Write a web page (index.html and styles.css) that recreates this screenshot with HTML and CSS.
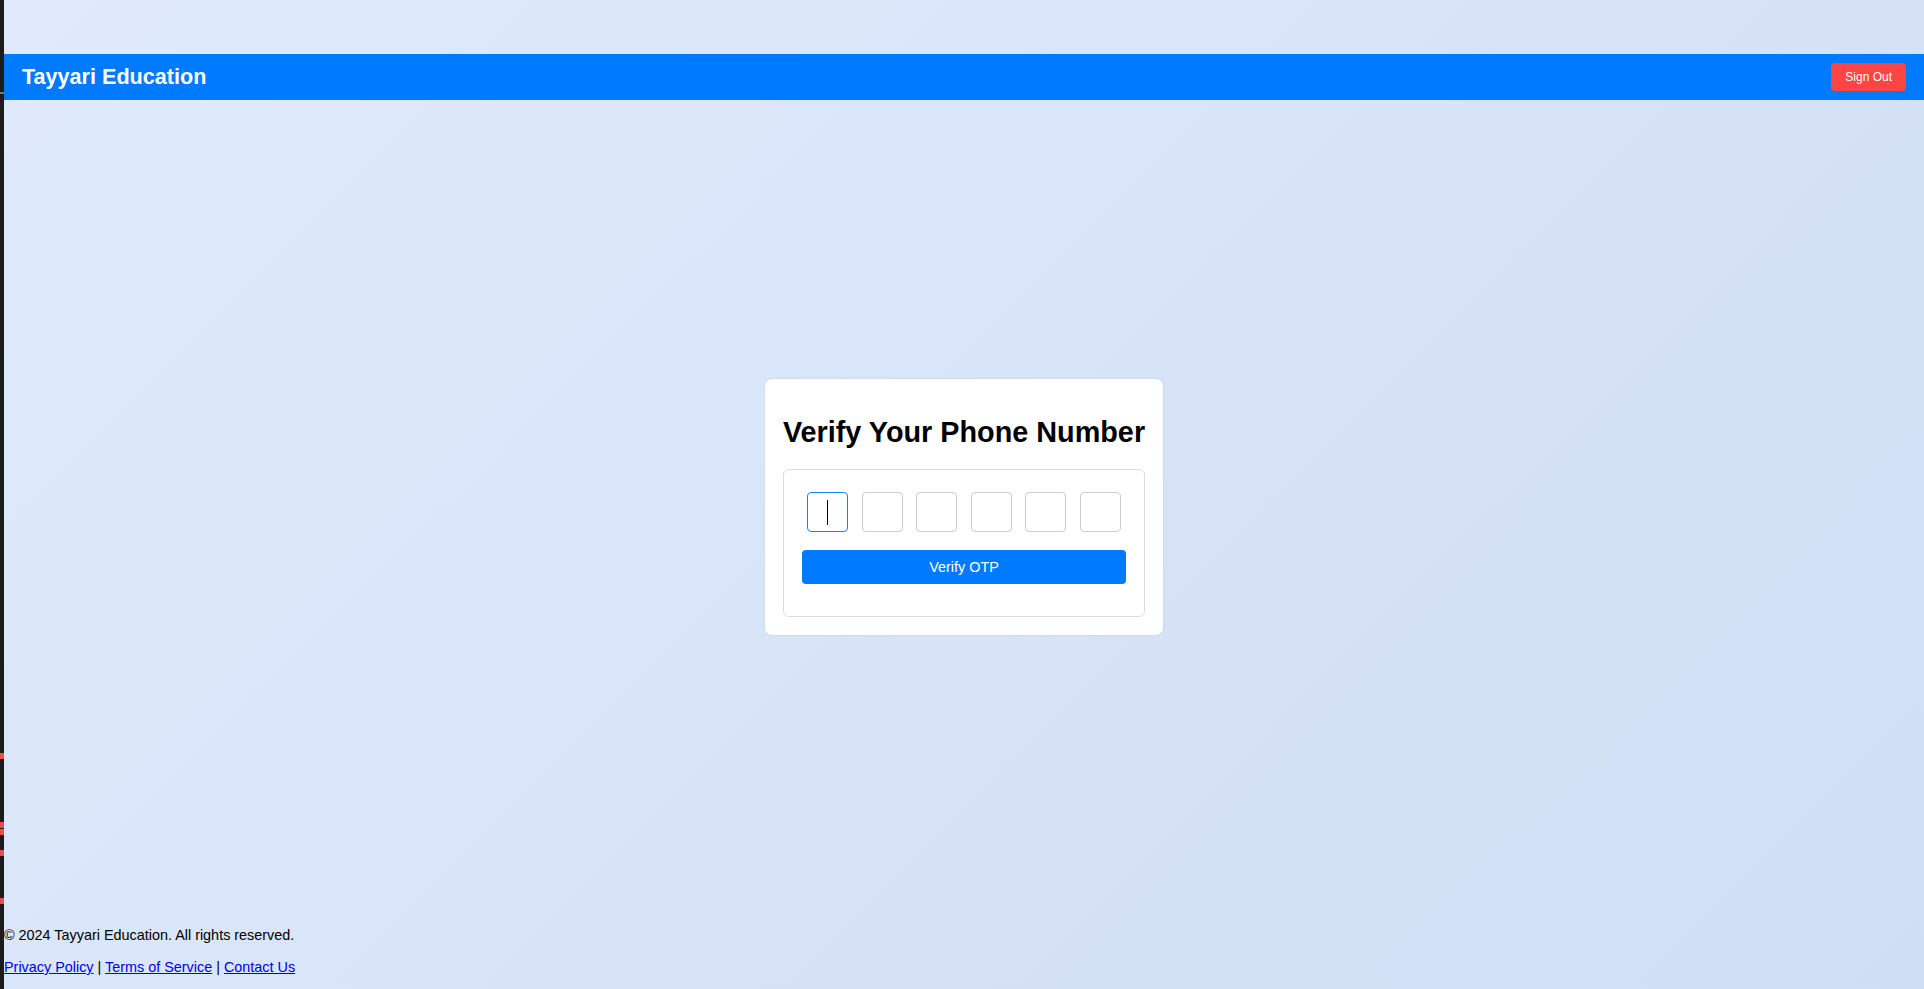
FILE: index.html
```html
<!DOCTYPE html>
<html lang="en">
<head>
<meta charset="utf-8">
<title>Tayyari Education</title>
<link rel="stylesheet" href="styles.css">
</head>
<body>
<div class="app">
  <aside class="strip">
    <span class="tick gray"></span>
    <span class="mark m1"></span>
    <span class="mark m2"></span>
    <span class="mark m3"></span>
    <span class="mark m4"></span>
    <span class="mark m5"></span>
  </aside>
  <div class="page">
    <div class="top-space"></div>
    <header class="navbar">
      <h1 class="brand">Tayyari Education</h1>
      <button class="signout" type="button">Sign Out</button>
    </header>
    <main class="main">
      <div class="card">
        <h2 class="title">Verify Your Phone Number</h2>
        <div class="otp-box">
          <div class="otp-row">
            <span class="otp-wrap"><input class="otp focused" type="text" maxlength="1"><span class="caret"></span></span>
            <span class="otp-wrap"><input class="otp" type="text" maxlength="1"></span>
            <span class="otp-wrap"><input class="otp" type="text" maxlength="1"></span>
            <span class="otp-wrap"><input class="otp" type="text" maxlength="1"></span>
            <span class="otp-wrap"><input class="otp" type="text" maxlength="1"></span>
            <span class="otp-wrap"><input class="otp" type="text" maxlength="1"></span>
          </div>
          <button class="verify" type="button">Verify OTP</button>
        </div>
      </div>
    </main>
    <footer class="footer">
      <p class="copy">© 2024 Tayyari Education. All rights reserved.</p>
      <p class="links"><a href="#">Privacy Policy</a> | <a href="#">Terms of Service</a> | <a href="#">Contact Us</a></p>
    </footer>
  </div>
</div>
</body>
</html>
```

FILE: styles.css
```css
* { box-sizing: border-box; }

html, body {
  margin: 0;
  padding: 0;
  height: 100%;
}

body {
  font-family: "Liberation Sans", Arial, Helvetica, sans-serif;
  background: linear-gradient(135deg, #e0eafc 0%, #cfdef3 100%);
  color: #000;
}

.app {
  display: flex;
  min-height: 100vh;
}

.strip {
  width: 4px;
  flex: 0 0 4px;
  background: #1c1c1c;
  display: flex;
  flex-direction: column;
}

.tick {
  display: block;
  width: 4px;
  height: 2px;
}

.tick.gray {
  background: #777;
  margin-top: 92px;
}

.mark {
  display: block;
  width: 4px;
  height: 6px;
  background: #f04a4a;
}

.m1 { margin-top: 659px; }
.m2 { margin-top: 63px; }
.m3 { margin-top: 1px; }
.m4 { margin-top: 15px; }
.m5 { margin-top: 42px; }

.page {
  flex: 1;
  display: flex;
  flex-direction: column;
  min-height: 100vh;
}

.top-space {
  height: 54px;
}

.navbar {
  height: 46px;
  background: #007bff;
  display: flex;
  align-items: center;
  justify-content: space-between;
  padding: 0 18px;
}

.brand {
  margin: 0;
  color: #fff;
  font-size: 21.6px;
  font-weight: bold;
}

.signout {
  height: 28px;
  padding: 0 14px;
  border: none;
  border-radius: 4px;
  background: #ff4444;
  color: #fff;
  font-family: "Liberation Sans", Arial, sans-serif;
  font-size: 12px;
}

.main {
  flex: 1;
  display: flex;
  align-items: center;
  justify-content: center;
}

.card {
  background: #fff;
  border-radius: 7px;
  padding: 0 18px 18px;
  box-shadow: 0 0 2px rgba(0, 0, 0, 0.12);
}

.title {
  margin: 37px 0 20px;
  font-size: 28.8px;
  font-weight: bold;
  white-space: nowrap;
}

.otp-box {
  border: 1px solid #dcdcdc;
  border-radius: 6px;
  padding: 18px;
}

.otp-row {
  display: flex;
  justify-content: space-between;
  padding-top: 4px;
  margin-bottom: 18px;
}

.otp-wrap {
  position: relative;
  display: block;
  margin: 0 5px;
}

.otp {
  display: block;
  width: 41px;
  height: 40px;
  border: 1px solid #ccc;
  border-radius: 4px;
  background: #fff;
  text-align: center;
  font-size: 20px;
  padding: 0;
  outline: none;
}

.otp.focused {
  border-color: #1a7ff0;
}

.caret {
  position: absolute;
  left: 20px;
  top: 8px;
  width: 1px;
  height: 25px;
  background: #000;
}

.verify {
  display: block;
  width: 100%;
  height: 34px;
  margin-bottom: 14px;
  border: none;
  border-radius: 4px;
  background: #007bff;
  color: #fff;
  font-family: "Liberation Sans", Arial, sans-serif;
  font-size: 14.4px;
}

.footer {
  font-size: 14.4px;
}

.footer p {
  margin: 0;
  line-height: 16px;
}

.footer .copy {
  margin: 14px 0 16px;
}

.footer .links {
  margin-bottom: 14px;
}

.footer a {
  color: #0000ee;
}
```
